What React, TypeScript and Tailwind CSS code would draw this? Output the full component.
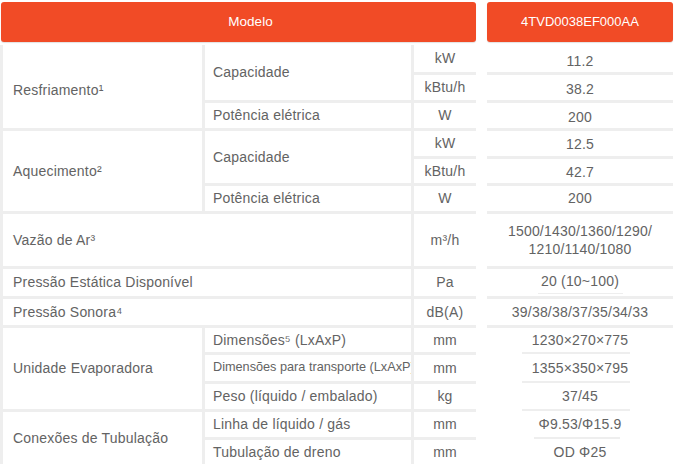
import React from 'react';

const font = { fontFamily: '"Liberation Sans", Arial, sans-serif' };

function Label({ children, className = '' }: { children: React.ReactNode; className?: string }) {
  return (
    <div className={`bg-white flex items-center whitespace-nowrap overflow-hidden ${className}`}>
      {children}
    </div>
  );
}

function Unit({ children }: { children: React.ReactNode }) {
  return <div className="bg-white flex items-center justify-center whitespace-nowrap">{children}</div>;
}

function FullLine() {
  return <div className="h-[3px] bg-[#eeeeee]" />;
}

function PartLine({ wide }: { wide?: boolean }) {
  return (
    <div className="h-[3px] flex items-start">
      <div className={wide ? 'h-[2px] ml-[35px] w-[108px] bg-[#eeeeee]' : 'h-[2px] ml-[47px] w-[86px] bg-[#eeeeee]'} />
    </div>
  );
}

export default function App() {
  return (
    <div className="w-[675px] h-[464px] bg-white overflow-hidden text-[14px] tracking-[0.2px] text-[#636363]" style={font}>
      <div className="flex gap-[11px] pt-[2px]">
        {/* left side */}
        <div className="w-[476px]">
          <div className="h-[40px] ml-[1px] pl-[24px] rounded-[3px] bg-[#f14b26] shadow-[0_1px_1px_rgba(0,0,0,0.12)] flex items-center justify-center text-white text-[13.5px] tracking-normal">
            Modelo
          </div>
          <div className="mt-[3px] grid grid-cols-[199px_206px_62px] grid-rows-[27px_25px_25px_25px_24px_25px_52px_27px_26px_24px_26px_25px_25px_25px] gap-[3px] pl-[3px] bg-[#eeeeee]">
            <Label className="row-span-3 pl-[10px] pt-[8px]">Resfriamento¹</Label>
            <Label className="row-span-2 pl-[8px]">Capacidade</Label>
            <Unit>kW</Unit>
            <Unit>kBtu/h</Unit>
            <Label className="pl-[8px]">Potência elétrica</Label>
            <Unit>W</Unit>

            <Label className="row-span-3 pl-[10px]">Aquecimento²</Label>
            <Label className="row-span-2 pl-[8px]">Capacidade</Label>
            <Unit>kW</Unit>
            <Unit>kBtu/h</Unit>
            <Label className="pl-[8px]">Potência elétrica</Label>
            <Unit>W</Unit>

            <Label className="col-span-2 pl-[10px]">Vazão de Ar³</Label>
            <Unit>m³/h</Unit>

            <Label className="col-span-2 pl-[10px]">Pressão Estática Disponível</Label>
            <Unit>Pa</Unit>

            <Label className="col-span-2 pl-[10px]">Pressão Sonora⁴</Label>
            <Unit>dB(A)</Unit>

            <Label className="row-span-3 pl-[10px]">Unidade Evaporadora</Label>
            <Label className="pl-[8px]">Dimensões⁵ (LxAxP)</Label>
            <Unit>mm</Unit>
            <Label className="pl-[8px] text-[12.7px] tracking-normal">Dimensões para transporte (LxAxP)</Label>
            <Unit>mm</Unit>
            <Label className="pl-[8px]">Peso (líquido / embalado)</Label>
            <Unit>kg</Unit>

            <Label className="row-span-2 pl-[10px]">Conexões de Tubulação</Label>
            <Label className="pl-[8px]">Linha de líquido / gás</Label>
            <Unit>mm</Unit>
            <Label className="pl-[8px]">Tubulação de dreno</Label>
            <Unit>mm</Unit>
          </div>
        </div>

        {/* right side */}
        <div className="w-[186px]">
          <div className="h-[40px] rounded-[3px] bg-[#f14b26] shadow-[0_1px_1px_rgba(0,0,0,0.12)] flex items-center justify-center text-white text-[13px] tracking-normal">
            4TVD0038EF000AA
          </div>
          <div className="mt-[3px] flex flex-col text-center">
            <div className="h-[27px] flex items-center justify-center pt-[5px]">11.2</div>
            <FullLine />
            <div className="h-[25px] flex items-center justify-center pt-[4px]">38.2</div>
            <FullLine />
            <div className="h-[25px] flex items-center justify-center pt-[4px]">200</div>
            <FullLine />
            <div className="h-[25px] flex items-center justify-center pt-[2px]">12.5</div>
            <FullLine />
            <div className="h-[24px] flex items-center justify-center pt-[2px]">42.7</div>
            <FullLine />
            <div className="h-[25px] flex items-center justify-center">200</div>
            <FullLine />
            <div className="h-[52px] flex flex-col items-center justify-center leading-[18px]">
              <span>1500/1430/1360/1290/</span>
              <span>1210/1140/1080</span>
            </div>
            <FullLine />
            <div className="h-[27px] flex items-start justify-center">
              <span className="w-[85px] h-[25px] border-b border-[#eeeeee] flex items-center justify-center whitespace-nowrap">20 (10~100)</span>
            </div>
            <FullLine />
            <div className="h-[26px] flex items-center justify-center">39/38/38/37/35/34/33</div>
            <FullLine />
            <div className="h-[24px] flex items-center justify-center">1230×270×775</div>
            <PartLine wide />
            <div className="h-[26px] flex items-center justify-center">1355×350×795</div>
            <PartLine wide />
            <div className="h-[25px] flex items-center justify-center">37/45</div>
            <PartLine wide />
            <div className="h-[25px] flex items-center justify-center">Φ9.53/Φ15.9</div>
            <PartLine />
            <div className="h-[24px] flex items-center justify-center">OD Φ25</div>
            <PartLine />
          </div>
        </div>
      </div>
    </div>
  );
}
